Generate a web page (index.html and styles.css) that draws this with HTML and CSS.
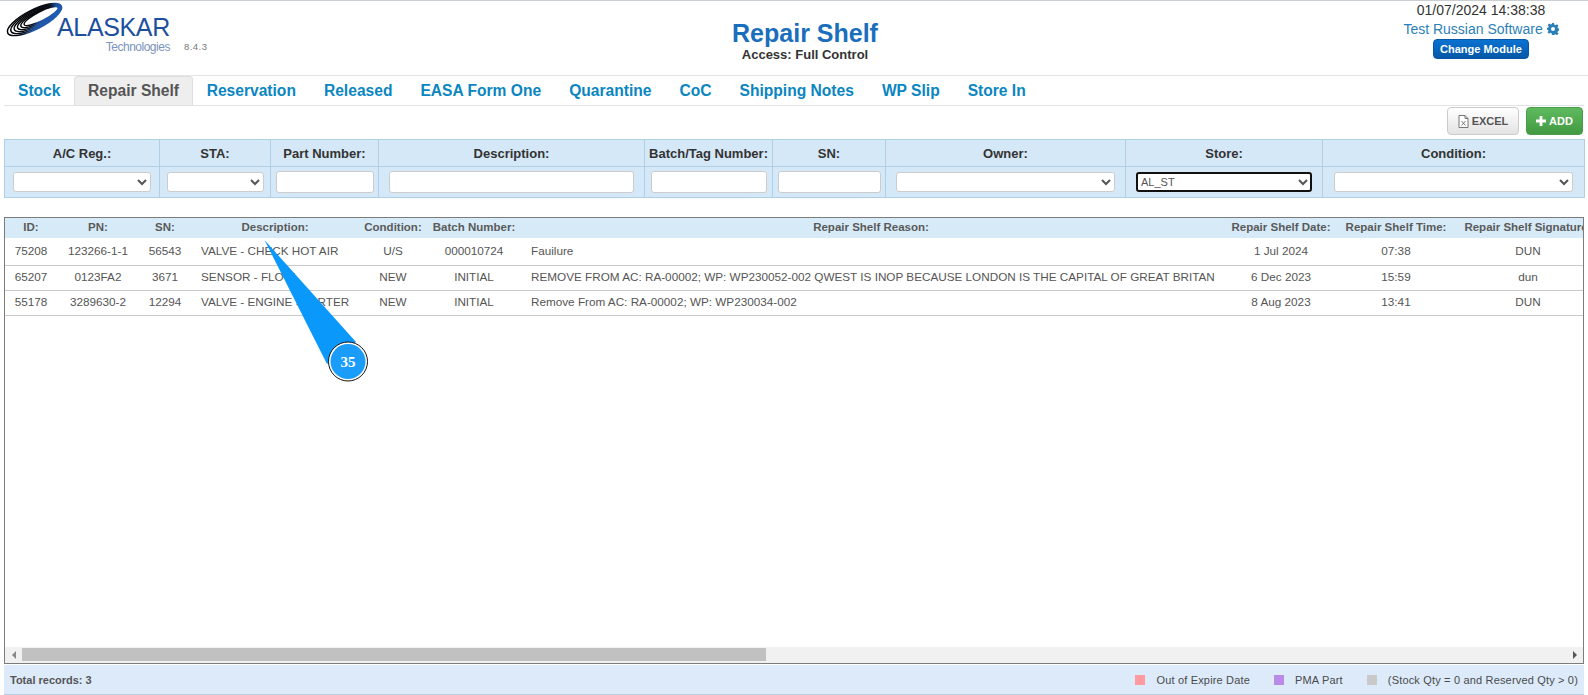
FILE: index.html
```html
<!DOCTYPE html>
<html lang="en">
<head>
<meta charset="utf-8">
<title>Repair Shelf</title>
<link rel="stylesheet" href="styles.css">
</head>
<body>
<div class="page">
  <header class="top">
    <div class="logo">
      <svg class="logo-mark" width="58" height="36" viewBox="0 0 58 36" aria-hidden="true">
        <defs>
          <linearGradient id="ring" x1="0" y1="0.1" x2="1" y2="0.9">
            <stop offset="0" stop-color="#000"/>
            <stop offset="0.5" stop-color="#0b0f18"/>
            <stop offset="0.66" stop-color="#1b4f9c"/>
            <stop offset="1" stop-color="#1f5fb8"/>
          </linearGradient>
        </defs>
        <g fill="none" stroke="url(#ring)" stroke-width="1.5" transform="rotate(-27 27.5 15.5)">
          <ellipse cx="27.5" cy="15.5" rx="30" ry="9.6"/>
          <ellipse cx="29" cy="15.5" rx="27.8" ry="8.6"/>
          <ellipse cx="30.5" cy="15.5" rx="25.6" ry="7.6"/>
          <ellipse cx="32" cy="15.5" rx="23.4" ry="6.6"/>
          <ellipse cx="33.5" cy="15.5" rx="21.2" ry="5.6"/>
          <ellipse cx="35" cy="15.5" rx="19" ry="4.6"/>
        </g>
      </svg>
      <div class="logo-words">
        <span class="logo-name">ALASKAR</span>
        <span class="logo-sub">Technologies</span>
      </div>
      <span class="logo-version">8.4.3</span>
    </div>
    <div class="title">
      <h1>Repair Shelf</h1>
      <p>Access: Full Control</p>
    </div>
    <div class="account">
      <div class="clock">01/07/2024 14:38:38</div>
      <div class="user">Test Russian Software
        <svg class="gear" width="12" height="12" viewBox="0 0 24 24" aria-hidden="true"><path fill-rule="evenodd" d="M10 0h4l.8 3.4 2.3 1 3-1.9 2.8 2.8-1.9 3 1 2.3 3.4.8v4l-3.4.8-1 2.3 1.9 3-2.8 2.8-3-1.9-2.3 1L14 24h-4l-.8-3.4-2.3-1-3 1.9-2.8-2.8 1.9-3-1-2.3L-1 14v-4l3.4-.8 1-2.3-1.9-3 2.8-2.8 3 1.9 2.3-1zM12 8a4 4 0 1 0 0 8 4 4 0 0 0 0-8z"/></svg>
      </div>
      <button class="module-btn" type="button">Change Module</button>
    </div>
  </header>

  <nav class="tabs">
    <a class="tab">Stock</a>
    <a class="tab active">Repair Shelf</a>
    <a class="tab">Reservation</a>
    <a class="tab">Released</a>
    <a class="tab">EASA Form One</a>
    <a class="tab">Quarantine</a>
    <a class="tab">CoC</a>
    <a class="tab">Shipping Notes</a>
    <a class="tab">WP Slip</a>
    <a class="tab">Store In</a>
  </nav>

  <div class="toolbar">
    <button class="btn btn-excel" type="button">
      <svg width="11" height="13" viewBox="0 0 11 13" aria-hidden="true"><path d="M1 .5h6l3 3v9H1z M7 .5v3h3" fill="#fff" stroke="#777"/><path d="M3.5 6l4 4.5M7.5 6l-4 4.5" stroke="#777" fill="none"/></svg>
      EXCEL
    </button>
    <button class="btn btn-add" type="button">
      <svg width="10" height="10" viewBox="0 0 10 10" aria-hidden="true"><path d="M3.6 0h2.8v3.6H10v2.8H6.4V10H3.6V6.4H0V3.6h3.6z" fill="#fff"/></svg>
      ADD
    </button>
  </div>

  <table class="filters">
    <colgroup>
      <col class="f1"><col class="f2"><col class="f3"><col class="f4"><col class="f5"><col class="f6"><col class="f7"><col class="f8"><col class="f9">
    </colgroup>
    <thead>
      <tr>
        <th>A/C Reg.:</th><th>STA:</th><th>Part Number:</th><th>Description:</th><th>Batch/Tag Number:</th><th>SN:</th><th>Owner:</th><th>Store:</th><th>Condition:</th>
      </tr>
    </thead>
    <tbody>
      <tr>
        <td class="p8"><select class="field"><option></option></select></td>
        <td class="p7"><select class="field"><option></option></select></td>
        <td class="p5"><input class="field tall" type="text"></td>
        <td class="p10"><input class="field tall" type="text"></td>
        <td class="p6"><input class="field tall" type="text"></td>
        <td class="p5"><input class="field tall" type="text"></td>
        <td class="p10"><select class="field"><option></option></select></td>
        <td class="p10"><select class="field focused"><option>AL_ST</option></select></td>
        <td class="p11"><select class="field"><option></option></select></td>
      </tr>
    </tbody>
  </table>

  <section class="grid-frame">
    <div class="grid-scroll">
      <table class="grid">
        <colgroup>
          <col class="c-id"><col class="c-pn"><col class="c-sn"><col class="c-desc"><col class="c-cond"><col class="c-batch"><col class="c-reason"><col class="c-date"><col class="c-time"><col class="c-sig"><col class="c-rest">
        </colgroup>
        <thead>
          <tr>
            <th>ID:</th><th>PN:</th><th>SN:</th><th>Description:</th><th>Condition:</th><th>Batch Number:</th><th>Repair Shelf Reason:</th><th>Repair Shelf Date:</th><th>Repair Shelf Time:</th><th>Repair Shelf Signature:</th><th></th>
          </tr>
        </thead>
        <tbody>
          <tr class="first">
            <td>75208</td><td>123266-1-1</td><td>56543</td><td class="left">VALVE - CHECK HOT AIR</td><td>U/S</td><td>000010724</td><td class="left">Fauilure</td><td>1 Jul 2024</td><td>07:38</td><td>DUN</td><td></td>
          </tr>
          <tr>
            <td>65207</td><td>0123FA2</td><td>3671</td><td class="left">SENSOR - FLOW</td><td>NEW</td><td>INITIAL</td><td class="left">REMOVE FROM AC: RA-00002; WP: WP230052-002 QWEST IS INOP BECAUSE LONDON IS THE CAPITAL OF GREAT BRITAN</td><td>6 Dec 2023</td><td>15:59</td><td>dun</td><td></td>
          </tr>
          <tr>
            <td>55178</td><td>3289630-2</td><td>12294</td><td class="left">VALVE - ENGINE STARTER</td><td>NEW</td><td>INITIAL</td><td class="left">Remove From AC: RA-00002; WP: WP230034-002</td><td>8 Aug 2023</td><td>13:41</td><td>DUN</td><td></td>
          </tr>
        </tbody>
      </table>
    </div>
    <div class="hbar">
      <span class="arrow arrow-left"></span>
      <div class="track"><div class="thumb"></div></div>
      <span class="arrow arrow-right"></span>
    </div>
  </section>

  <footer class="status">
    <span class="total">Total records: 3</span>
    <span class="legend"><i class="swatch red"></i>Out of Expire Date</span>
    <span class="legend"><i class="swatch purple"></i>PMA Part</span>
    <span class="legend"><i class="swatch grey"></i>(Stock Qty = 0 and Reserved Qty &gt; 0)</span>
  </footer>
</div>

<svg class="callout" width="110" height="135" viewBox="0 0 110 135" aria-hidden="false">
  <path d="M4.5 0 L96 102 L67 124 Z" fill="#0a99fb"/>
  <circle cx="88" cy="121.5" r="19.5" fill="#fff" stroke="#111" stroke-width="1"/>
  <circle cx="88" cy="121.5" r="17.5" fill="#1a9cfb"/>
  <text x="88" y="127" text-anchor="middle" class="callout-num">35</text>
</svg>
</body>
</html>
```

FILE: styles.css
```css
* { box-sizing: border-box; }
html, body { margin: 0; height: 100%; background: #fff; overflow: hidden; }
body { font-family: "Liberation Sans", Arial, sans-serif; color: #333; }
.page { height: 695px; display: flex; flex-direction: column; }

/* header */
.top {
  height: 76px; flex: none;
  border-top: 1px solid #c9ced2;
  border-bottom: 1px solid #e4e4e4;
  display: grid;
  grid-template-columns: 236px 1fr 214px;
}
.logo { display: flex; align-items: flex-start; padding: 3px 0 0 7px; }
.logo-mark { flex: none; overflow: visible; }
.logo-words { display: flex; flex-direction: column; align-items: flex-end; margin: 10px 0 0 -8px; }
.logo-name { font-size: 25px; line-height: 27px; letter-spacing: -.35px; color: #1d4f9f; }
.logo-sub { font-size: 12px; line-height: 14px; letter-spacing: -.5px; color: #7b94bd; margin-top: -1px; }
.logo-version { font-size: 9.5px; letter-spacing: .5px; color: #777; margin: 37px 0 0 14px; }
.title { text-align: center; padding-top: 18px; }
.title h1 { margin: 0; font-size: 25px; line-height: 29px; font-weight: 700; color: #1a6fbd; }
.title p { margin: 0; font-size: 13px; line-height: 14px; font-weight: 700; color: #333; }
.account { text-align: center; display: flex; flex-direction: column; align-items: center; }
.clock { font-size: 14px; line-height: 18px; color: #333; }
.user { font-size: 14px; line-height: 18px; color: #2b7fb8; margin-top: 1px; white-space: nowrap; }
.gear { fill: #2b7fb8; vertical-align: -1px; }
.module-btn {
  width: 96px; height: 20px; margin-top: 1px; padding: 0;
  border: 1px solid #0558a8; border-radius: 4px;
  background: linear-gradient(#0a72d2, #0557a6);
  color: #fff; font: 700 11px "Liberation Sans", Arial, sans-serif;
}

/* tabs */
.tabs {
  height: 30px; flex: none; margin: 0 4px;
  border-bottom: 1px solid #dfe3e6;
  display: flex; align-items: stretch;
}
.tab {
  padding: 1px 14px 0; font-size: 15.6px; line-height: 28px; font-weight: 700; color: #0b86c1;
}
.tab.active {
  padding: 0 12.6px;
  background: #eeeeee; color: #555;
  border: 1px solid #dedede; border-bottom: 0; border-radius: 4px 4px 0 0;
}

/* toolbar */
.toolbar { height: 33px; flex: none; display: flex; justify-content: flex-end; gap: 7px; padding: 1px 5px 0 0; }
.btn {
  height: 28px; display: inline-flex; align-items: center; justify-content: center; gap: 3px; padding: 0;
  border-radius: 4px; font: 700 11px "Liberation Sans", Arial, sans-serif;
}
.btn-excel { width: 72px; border: 1px solid #ccc; background: linear-gradient(#fff, #e3e3e3); color: #555; }
.btn-add { width: 57px; border: 1px solid #4a9e4a; background: linear-gradient(#5fba5f, #419a41); color: #fff; }

/* filters */
.filters {
  width: 1580px; margin: 0 4px; flex: none; height: 58px;
  table-layout: fixed; border-collapse: collapse; background: #d5e8f7;
  border: 1px solid #aecfe6;
}
.f1 { width: 155px; } .f2 { width: 111px; } .f3 { width: 108px; } .f4 { width: 266px; }
.f5 { width: 128px; } .f6 { width: 113px; } .f7 { width: 240px; } .f8 { width: 197px; } .f9 { width: 262px; }
.filters th {
  height: 27px; padding: 0; font-size: 13px; font-weight: 700; color: #333;
  border: 1px solid #aecfe6; border-top: 0; text-align: center; white-space: nowrap;
}
.filters td { height: 31px; border: 1px solid #aecfe6; border-bottom: 0; vertical-align: middle; }
.p5 { padding: 0 4.5px; } .p6 { padding: 0 5.5px; } .p7 { padding: 0 6.5px; } .p8 { padding: 0 8px; }
.p10 { padding: 0 10px; } .p11 { padding: 0 11px; }
.field {
  display: block; width: 100%; height: 20px; padding: 0 2px; background-color: #fff;
  border: 1px solid #ccc; border-radius: 3px; font: 11px "Liberation Sans", Arial, sans-serif; color: #555;
}
.field.tall { height: 22px; }
.field.focused { padding: 0; outline: 2px solid #111; outline-offset: -2px; }

/* data grid */
.grid-frame {
  margin: 19px 4px 0; flex: 1; min-height: 0; width: 1580px;
  border: 1px solid #7c7c7c; display: flex; flex-direction: column;
}
.grid-scroll { flex: 1; min-height: 0; overflow: hidden; }
.grid { width: 3200px; table-layout: fixed; border-collapse: collapse; font-size: 11.72px; }
.c-id { width: 52px; } .c-pn { width: 82px; } .c-sn { width: 52px; } .c-desc { width: 168px; }
.c-cond { width: 68px; } .c-batch { width: 94px; } .c-reason { width: 700px; } .c-date { width: 120px; }
.c-time { width: 110px; } .c-sig { width: 154px; } .c-rest { width: 1600px; }
.grid th {
  height: 20px; padding: 0 0 2px; background: #d6eaf8; font-size: 11.5px; font-weight: 700; color: #5a5a5a;
  text-align: center; white-space: nowrap; overflow: hidden;
}
.grid td {
  height: 25px; padding: 0 0 2px; color: #555; text-align: center; white-space: nowrap;
  border-bottom: 1px solid #c9c9c9;
}
.grid tr.first td { height: 27px; }
.grid td.left { text-align: left; padding-left: 10px; }
.hbar { height: 16px; flex: none; background: #f1f1f1; display: flex; align-items: center; }
.track { flex: 1; height: 100%; padding: 1px 0 2px; }
.thumb { width: 744px; height: 100%; background: #c1c1c1; }
.arrow { flex: none; width: 17px; height: 16px; display: flex; align-items: center; justify-content: center; }
.arrow::before { content: ""; border: 4px solid transparent; }
.arrow-left::before { border-right-color: #888; border-left-width: 0; }
.arrow-right::before { border-left-color: #555; border-right-width: 0; }

/* footer */
.status {
  height: 30px; flex: none; margin: 1px 4px 0; width: 1580px; padding: 1px 6px 0;
  background: #dceafa; border-bottom: 1px solid #b8cfe2;
  display: flex; align-items: center; font-size: 11px; color: #333;
}
.total { font-weight: 700; margin-right: auto; color: #555; }
.legend { display: flex; align-items: center; margin-left: 24px; letter-spacing: .17px; color: #4a4a4a; }
.swatch { width: 10px; height: 10px; margin-right: 11px; }
.red { background: #ff9aa0; }
.purple { background: #b98be6; }
.grey { background: #c9c9c9; }

/* callout overlay */
.callout { position: absolute; left: 260px; top: 240px; overflow: visible; }
.callout-num { font: 700 15px "Liberation Serif", "DejaVu Serif", serif; fill: #fff; }
```
